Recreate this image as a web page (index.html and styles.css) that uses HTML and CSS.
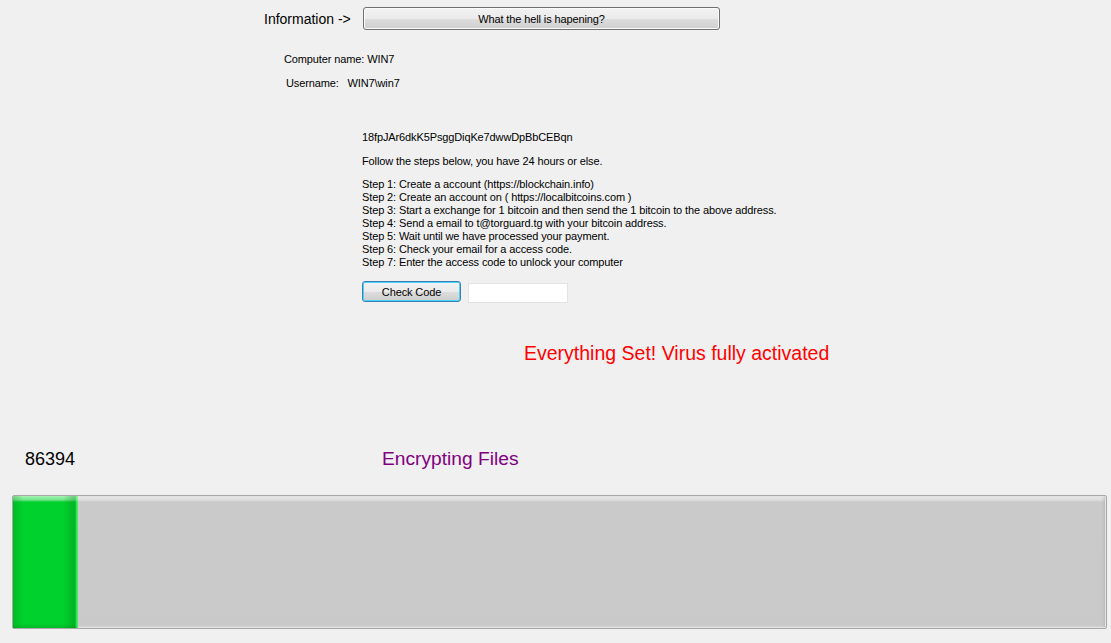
FILE: index.html
```html
<!DOCTYPE html>
<html>

<head>
    <meta charset="UTF-8">
    <title>Information</title>
    <link rel="stylesheet" href="styles.css">
</head>

<body>
    <div class="form">
        <div class="top-row">
            <span class="info-label">Information -&gt;</span>
            <button class="btn btn-wide" type="button">What the hell is hapening?</button>
        </div>

        <div class="machine">
            <p class="computer">Computer name: WIN7</p>
            <p class="user">Username:&nbsp;&nbsp; WIN7\win7</p>
        </div>

        <div class="ransom">
            <p class="address">18fpJAr6dkK5PsggDiqKe7dwwDpBbCEBqn</p>
            <p class="follow">Follow the steps below, you have 24 hours or else.</p>
            <ul class="steps">
                <li>Step 1: Create a account (https://blockchain.info)</li>
                <li>Step 2: Create an account on ( https://localbitcoins.com )</li>
                <li>Step 3: Start a exchange for 1 bitcoin and then send the 1 bitcoin to the above address.</li>
                <li>Step 4: Send a email to t@torguard.tg with your bitcoin address.</li>
                <li>Step 5: Wait until we have processed your payment.</li>
                <li>Step 6: Check your email for a access code.</li>
                <li>Step 7: Enter the access code to unlock your computer</li>
            </ul>
            <div class="code-row">
                <button class="btn btn-code" type="button">Check Code</button>
                <input class="code-input" type="text">
            </div>
        </div>

        <p class="status-msg">Everything Set! Virus fully activated</p>

        <div class="status-row">
            <span class="counter">86394</span>
            <span class="encrypting">Encrypting Files</span>
        </div>

        <div class="progress">
            <div class="progress-fill" style="width: 65px;"></div>
        </div>
    </div>
</body>

</html>
```

FILE: styles.css
```css
* {
    margin: 0;
    padding: 0;
    list-style: none;
    box-sizing: border-box;
}

body {
    background-color: #f0f0f0;
    font-family: "Liberation Sans", Arial, sans-serif;
    font-size: 11px;
    letter-spacing: -0.12px;
    color: #000;
    width: 1111px;
    height: 643px;
    overflow: hidden;
}

.top-row {
    display: flex;
    align-items: center;
    padding: 7px 0 0 264px;
    height: 30px;
}

.info-label {
    font-size: 14px;
    letter-spacing: 0;
    width: 99px;
}

.btn {
    font-family: "Liberation Sans", Arial, sans-serif;
    font-size: 11px;
    letter-spacing: -0.12px;
    color: #000;
    border: 1px solid #707070;
    border-radius: 3px;
    background: linear-gradient(#f2f2f2 0%, #ebebeb 50%, #dddddd 51%, #cfcfcf 100%);
    box-shadow: inset 0 0 0 1px #fbfbfb;
}

.btn-wide {
    width: 357px;
    height: 23px;
}

.machine {
    padding: 23px 0 0 284px;
}

.machine p {
    line-height: 13px;
}

.user {
    margin: 11px 0 0 2px;
}

.ransom {
    padding: 41px 0 0 362px;
}

.ransom p,
.steps li {
    line-height: 13px;
}

.follow {
    margin-top: 11px;
}

.steps {
    margin-top: 10px;
}

.code-row {
    display: flex;
    align-items: flex-end;
    gap: 7px;
    margin-top: 12px;
}

.btn-code {
    width: 99px;
    height: 21px;
    border-color: #3c7fb1;
    box-shadow: inset 0 0 0 1px #48d2fd;
}

.code-input {
    width: 100px;
    height: 20px;
    border: 1px solid #e3e3e3;
    background-color: #fff;
    outline: none;
    margin-bottom: -1px;
}

.status-msg {
    margin: 39px 0 0 524px;
    font-size: 19.5px;
    letter-spacing: 0;
    line-height: 24px;
    color: #ff0000;
}

.status-row {
    display: flex;
    align-items: center;
    height: 24px;
    margin-top: 82px;
    padding-left: 25px;
}

.counter {
    font-size: 18px;
    letter-spacing: 0;
    width: 357px;
}

.encrypting {
    font-size: 19.2px;
    letter-spacing: 0;
    color: #800080;
}

.progress {
    margin: 24px 0 0 12px;
    width: 1095px;
    height: 134px;
    border: 1px solid #a8a8a8;
    border-radius: 2px;
    background: linear-gradient(#e8e8e8 0px, #dcdcdc 4px, #cacaca 6px, #c9c9c9 calc(100% - 3px), #d8d8d8 100%);
    box-shadow: inset 0 0 0 1px #e2e2e2, inset -4px 0 3px -2px #b8b8b8;
    display: flex;
}

.progress-fill {
    height: 100%;
    background:
        linear-gradient(90deg, rgba(0, 120, 20, 0.25) 0px, rgba(0, 0, 0, 0) 10px, rgba(0, 0, 0, 0) 50px, rgba(0, 110, 20, 0.3) 62px, rgba(120, 255, 140, 0.6) 64px),
        linear-gradient(#a6f3b2 0px, #6fe589 4px, #00d12d 6px, #00d12d calc(100% - 4px), #00b827 100%);
}
```
